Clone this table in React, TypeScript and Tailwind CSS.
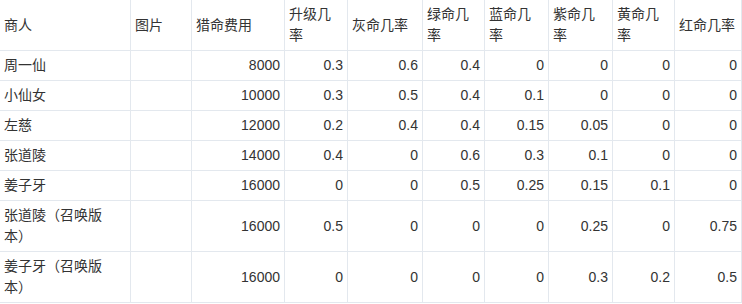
const headers = ["商人", "图片", "猎命费用", "升级几率", "灰命几率", "绿命几率", "蓝命几率", "紫命几率", "黄命几率", "红命几率"];

const widths = ["w-[131px]", "w-[61px]", "w-[93px]", "w-[63px]", "w-[75px]", "w-[62px]", "w-[64px]", "w-[64px]", "w-[62px]", "w-[67px]"];

const rows: [string, string, ...string[]][] = [
  ["周一仙", "", "8000", "0.3", "0.6", "0.4", "0", "0", "0", "0"],
  ["小仙女", "", "10000", "0.3", "0.5", "0.4", "0.1", "0", "0", "0"],
  ["左慈", "", "12000", "0.2", "0.4", "0.4", "0.15", "0.05", "0", "0"],
  ["张道陵", "", "14000", "0.4", "0", "0.6", "0.3", "0.1", "0", "0"],
  ["姜子牙", "", "16000", "0", "0", "0.5", "0.25", "0.15", "0.1", "0"],
  ["张道陵（召唤版本）", "", "16000", "0.5", "0", "0", "0", "0.25", "0", "0.75"],
  ["姜子牙（召唤版本）", "", "16000", "0", "0", "0", "0", "0.3", "0.2", "0.5"],
];

export default function App() {
  return (
    <div className="w-[742px] h-[304px] bg-white overflow-hidden font-['Liberation_Sans','Noto_Sans_CJK_SC',sans-serif] text-[14px] leading-[21px] text-[#333]">
      <table className="table-fixed border-separate border-spacing-0 w-[742px]">
        <colgroup>
          {widths.map((w, i) => (
            <col key={i} className={w} />
          ))}
        </colgroup>
        <thead>
          <tr>
            {headers.map((h) => (
              <th
                key={h}
                className="font-normal text-left align-middle px-[4px] py-[4px] border-r border-b border-[#e3e8ee]"
              >
                {h}
              </th>
            ))}
          </tr>
        </thead>
        <tbody>
          {rows.map((r) => (
            <tr key={r[0]}>
              {r.map((c, i) => (
                <td
                  key={i}
                  className={
                    "align-middle py-[4px] border-r border-b border-[#e3e8ee] " +
                    (i === 0 ? "text-left pl-[4px] pr-[14px]" : i === 1 ? "text-left px-[4px]" : "text-right px-[4px]")
                  }
                >
                  {c}
                </td>
              ))}
            </tr>
          ))}
        </tbody>
      </table>
    </div>
  );
}
